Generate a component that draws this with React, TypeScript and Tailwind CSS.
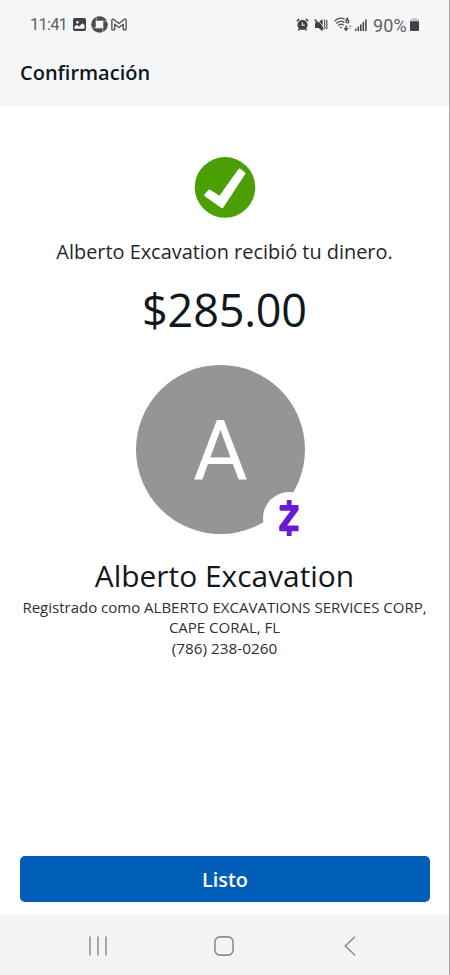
const AlarmIcon = () => (
  <svg width="13" height="13" viewBox="0 0 13 13" fill="none">
    <circle cx="6.5" cy="7" r="5.1" fill="#3f4042" />
    <path d="M0.9 3.2 3.2 1M12.1 3.2 9.8 1M2.4 12.4l1.4-1.6M10.6 12.4 9.2 10.8" stroke="#3f4042" strokeWidth="1.6" />
    <path d="M6.3 4.2v3h2.6" stroke="#f5f6f8" strokeWidth="1.1" />
  </svg>
);

const VibrateIcon = () => (
  <svg width="14" height="14" viewBox="0 0 14 14" fill="none">
    <path d="M1 4.6h3L8.6 1v12.2L4.6 10H1z" fill="#3f4042" />
    <path d="M2.6 1l7 7.8" stroke="#f5f6f8" strokeWidth="0.8" />
    <path d="M0.8 1.4l8.4 9.8" stroke="#3f4042" strokeWidth="1.6" />
    <path d="M10.2 1.8l.8 1.4-.8 1.6.8 1.6-.8 1.6.8 1.6-.8 1.6M12.4 1.8l.8 1.4-.8 1.6.8 1.6-.8 1.6.8 1.6-.8 1.6" stroke="#55565a" strokeWidth="1.1" />
  </svg>
);

const WifiIcon = () => (
  <svg width="18" height="15" viewBox="0 0 18 15" fill="none">
    <path d="M0.6 4.2C3.4 1.1 7.6.7 10.6 2.1M2.3 6.5c2.2-2.4 5.8-2.5 8.2-.9M4.2 8.7c1.4-1.5 3.8-1.6 5.4-.4" stroke="#55565a" strokeWidth="1.4" />
    <path d="M5.6 10.2q1.4-1 2.8 0L7 11.7z" fill="#55565a" />
    <path d="M14.2 1c-1.7.4-2.1 1.6-2.1 3" stroke="#4b4c50" strokeWidth="1.3" />
    <circle cx="13.5" cy="4.4" r="1.4" stroke="#4b4c50" strokeWidth="1.3" />
    <path d="M12.1 8.4v4.6M10.2 11.1l1.9 2.1 1.9-2.1" stroke="#4b4c50" strokeWidth="1.4" />
    <path d="M16 12V8.6M14.6 9.8 16 8.3l1.4 1.5" stroke="#a9abaf" strokeWidth="1" />
  </svg>
);

const SignalIcon = () => (
  <svg width="12" height="12" viewBox="0 0 12 12" fill="#4b4c50">
    <rect x="0" y="9.6" width="1.5" height="2.4" />
    <rect x="2.5" y="7.6" width="1.6" height="4.4" />
    <rect x="5" y="5.4" width="1.6" height="6.6" />
    <rect x="7.5" y="2.9" width="1.6" height="9.1" />
    <rect x="10.1" y="0.4" width="1.6" height="11.6" />
  </svg>
);

const BatteryIcon = () => (
  <svg width="9" height="13" viewBox="0 0 9 13">
    <path d="M2.2 0h4.6v1.2H8a1 1 0 0 1 1 1V3.4H0V2.2a1 1 0 0 1 1-1h1.2z" fill="#c3c4c6" />
    <path d="M0 3.2h9V12a1 1 0 0 1-1 1H1a1 1 0 0 1-1-1z" fill="#3f4042" />
  </svg>
);

const PictureIcon = () => (
  <svg width="13" height="13" viewBox="0 0 13 13">
    <rect width="13" height="13" rx="1.8" fill="#3f4042" />
    <circle cx="4.4" cy="4.3" r="1.4" fill="#f5f6f8" />
    <path d="M1.5 10.8V8.6l2.4-1.8 2 1.6 3.5-3.2 2.1 1.9v3.7z" fill="#f5f6f8" />
  </svg>
);

const BankIcon = () => (
  <svg width="17" height="17" viewBox="0 0 17 17">
    <circle cx="8.5" cy="8.5" r="8.3" fill="#4b4c4f" />
    <path d="M4.7 4.7h7.6v7.6H4.7z" fill="#f5f6f8" />
    <path d="M5.2 1v4.2M16 5.2h-4.2M11.8 16v-4.2M1 11.8h4.2" stroke="#c5c7c9" strokeWidth="0.7" />
  </svg>
);

const MailIcon = () => (
  <svg width="16" height="13" viewBox="0 0 16 13" fill="none" stroke="#4b4c50" strokeWidth="1.3" strokeLinejoin="round">
    <path d="M0.9 11.8V2.3Q1 .8 2.6 1.2L8 5.6l5.4-4.4q1.6-.4 1.7 1.1v9.5h-2.8V6.2L8 9.6 3.7 6.2v5.6z" />
  </svg>
);

const StatusBar = () => (
  <div className="flex h-[49px] items-center pl-[30px] pr-[30px] font-[Roboto] text-[#606165]">
    <span className="w-[43px] pt-px text-[16.5px] tracking-[-0.8px]">11:41</span>
    <div className="flex items-center gap-[5px]">
      <PictureIcon />
      <BankIcon />
      <div className="-ml-0.5">
        <MailIcon />
      </div>
    </div>
    <div className="ml-auto flex items-center">
      <AlarmIcon />
      <div className="ml-[5px] mr-1.5">
        <VibrateIcon />
      </div>
      <WifiIcon />
      <div className="ml-[3px] mr-1.5">
        <SignalIcon />
      </div>
      <span className="w-[37px] pt-px text-[18px] tracking-[0.1px] whitespace-nowrap">90%</span>
      <BatteryIcon />
    </div>
  </div>
);

const SuccessIcon = () => (
  <svg width="62" height="62" viewBox="0 0 62 62">
    <circle cx="31" cy="31.4" r="30.3" fill="#4b9f05" />
    <path d="M11.6 39.2l3.9-4.4 10.3 6.8L45.6 13.8l4.6 3.6L28.1 51z" fill="#fff" stroke="#fff" strokeWidth="2.6" strokeLinejoin="round" />
  </svg>
);

const ZelleIcon = () => (
  <svg width="20" height="36" viewBox="0 0 20 36" fill="#6a1bd1">
    <rect x="7.8" y="0" width="4.8" height="8" rx="0.6" />
    <rect x="7.8" y="28" width="4.8" height="8" rx="0.6" />
    <path d="M1.6 5h17q1 0 1 1v4L8.2 25.4h10.4q1 0 1 1v3.9q0 1-1 1H1.2q-1 0-1-1v-4L11.6 10.8h-10q-1 0-1-1V6q0-1 1-1z" />
  </svg>
);

const Avatar = () => (
  <div className="relative mt-[25px] mr-2 size-[169px]">
    <div className="flex size-full items-center justify-center rounded-full bg-[#959595]">
      <span className="pt-1 font-[Roboto] text-[84px] leading-none text-white">A</span>
    </div>
    <div className="absolute top-[127px] left-[127px] flex size-[52px] items-center justify-center rounded-full bg-white">
      <ZelleIcon />
    </div>
  </div>
);

const NavBar = () => (
  <div className="flex h-[60px] items-center justify-between bg-[#f4f4f6] pt-px pr-[93px] pl-[88px]">
    <svg width="20" height="20" viewBox="0 0 20 20" stroke="#8c8c8e" strokeWidth="1.5">
      <path d="M2 .5v19M10 .5v19M18 .5v19" />
    </svg>
    <svg className="mr-1" width="20" height="20" viewBox="0 0 20 20" fill="none" stroke="#8c8c8e" strokeWidth="1.6">
      <rect x="0.9" y="0.9" width="18.2" height="18.2" rx="5.2" />
    </svg>
    <svg width="12" height="20" viewBox="0 0 12 20" fill="none" stroke="#8c8c8e" strokeWidth="1.5">
      <path d="M11 .8 1.2 10 11 19.2" />
    </svg>
  </div>
);

export default function App() {
  return (
    <div className="flex h-[975px] w-[450px] flex-col border-r border-[#a5a6a8] bg-white font-['Open_Sans',sans-serif] text-[#10171d]">
      <header className="h-[107px] bg-[#f5f6f8]">
        <StatusBar />
        <h1 className="pl-5 text-[20px] leading-[47px] font-semibold">Confirmación</h1>
      </header>

      <main className="flex flex-1 flex-col items-center pt-[49px] text-center">
        <SuccessIcon />
        <p className="mt-5 text-[19.9px] leading-[28px] text-[#22272b]">Alberto Excavation recibió tu dinero.</p>
        <p className="mt-3.5 text-[45px] leading-[60px] tracking-[-0.2px]">$285.00</p>
        <Avatar />
        <h2 className="mt-[22px] text-[29.9px] leading-[40px]">Alberto Excavation</h2>
        <div className="pt-px text-[15px] leading-5 text-[#2c3135]">
          <p>Registrado como ALBERTO EXCAVATIONS SERVICES CORP,</p>
          <p>CAPE CORAL, FL</p>
          <p className="pt-px text-[15.3px]">(786) 238-0260</p>
        </div>
      </main>

      <div className="pr-[19px] pb-[13px] pl-5">
        <button className="block h-[46px] w-full rounded-[5px] bg-[#005eb8] pt-px text-[19.8px] font-semibold text-white">
          Listo
        </button>
      </div>
      <NavBar />
    </div>
  );
}
